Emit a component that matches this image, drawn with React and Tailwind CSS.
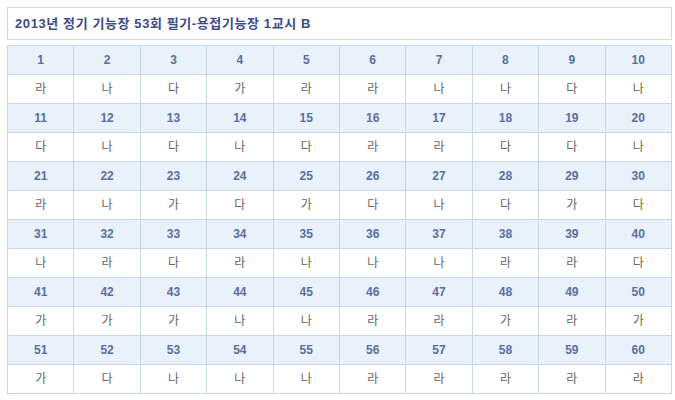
import React from "react";

const answers = [
  ["라", "나", "다", "가", "라", "라", "나", "나", "다", "나"],
  ["다", "나", "다", "나", "다", "라", "라", "다", "다", "나"],
  ["라", "나", "가", "다", "가", "다", "나", "다", "가", "다"],
  ["나", "라", "다", "라", "나", "나", "나", "라", "라", "다"],
  ["가", "가", "가", "나", "나", "라", "라", "가", "라", "가"],
  ["가", "다", "나", "나", "나", "라", "라", "라", "라", "라"],
];

export default function App() {
  return (
    <div
      className="w-[675px] h-[400px] bg-white p-[7px] pr-[4px]"
      style={{ fontFamily: '"Liberation Sans", "Noto Sans CJK KR", sans-serif' }}
    >
      <div className="h-[33px] w-[665px] border border-[#d9d9d9] flex items-center pl-[7px]">
        <span className="text-[13px] font-bold text-[#3e4a8a] tracking-[0.6px]">
          2013년 정기 기능장 53회 필기-용접기능장 1교시 B
        </span>
      </div>
      <table className="mt-[5px] w-[665px] table-fixed border-collapse">
        <tbody>
          {answers.map((row, r) => (
            <React.Fragment key={r}>
              <tr className="h-[29px] bg-[#e9f1fa]">
                {row.map((_, c) => (
                  <td
                    key={c}
                    className="border border-[#c9d7e6] text-center text-[12px] font-bold text-[#5a6f9f] p-0 leading-none"
                  >
                    {r * 10 + c + 1}
                  </td>
                ))}
              </tr>
              <tr className="h-[29px] bg-white">
                {row.map((a, c) => (
                  <td
                    key={c}
                    className="border border-[#c9d7e6] text-center text-[12px] text-[#666666] p-0 leading-none"
                  >
                    {a}
                  </td>
                ))}
              </tr>
            </React.Fragment>
          ))}
        </tbody>
      </table>
    </div>
  );
}
